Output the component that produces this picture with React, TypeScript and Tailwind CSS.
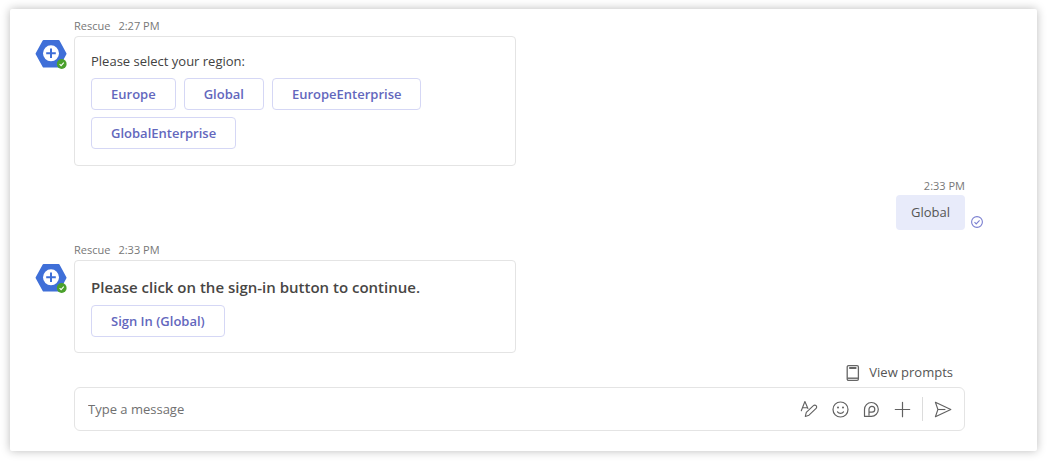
import React from 'react';

const Avatar: React.FC = () => (
  <svg viewBox="0 0 34 32" className="w-[34px] h-8 shrink-0" role="img" aria-label="Rescue, available">
    <path d="M8.6 2h15a1 1 0 0 1 .9.5l6.9 12.7a1.2 1.2 0 0 1 0 1.1L24.5 29a1 1 0 0 1-.9.5h-15a1 1 0 0 1-.9-.5L.7 16.3a1.2 1.2 0 0 1 0-1.1L7.7 2.5A1 1 0 0 1 8.6 2z" fill="#3f6fd8" />
    <circle cx="16" cy="15.3" r="8" fill="#fff" />
    <path d="M16 10.500v9.600M11.200 15.300h9.600" stroke="#3f6fd8" strokeWidth="2" />
    <circle cx="26.7" cy="26" r="4.9" fill="#4aa02c" />
    <path d="M24.600 26.100l1.500 1.500 2.700-3" fill="none" stroke="#fff" strokeWidth="1.1" />
  </svg>
);

const SeenIcon: React.FC = () => (
  <svg viewBox="0 0 12 12" className="w-3 h-3 shrink-0 mb-0.5" fill="none" stroke="#7a7fd0" strokeWidth="1.1" role="img" aria-label="Sent">
    <circle cx="6" cy="6" r="5.4" />
    <path d="M3.500 6.200l1.700 1.700 3.400-3.500" />
  </svg>
);

const PromptsIcon: React.FC = () => (
  <svg viewBox="0 0 14 18" className="w-3.5 h-[18px]" fill="none" stroke="#666" strokeWidth="1.3">
    <rect x="1.200" y="1.600" width="11.200" height="14.800" rx="1.300" />
    <path d="M3.200 4h7.200" strokeWidth="2" />
    <path d="M1.200 14.200h11.200" strokeWidth="1.400" />
  </svg>
);

const FormatIcon: React.FC = () => (
  <svg viewBox="0 0 18 18" className="w-[18px] h-[18px]" fill="none" stroke="#616161" strokeWidth="1.1" strokeLinejoin="round" strokeLinecap="round">
    <path d="M1.300 10.800L4.900 1.500l3 7M2.500 7.800h4.700" />
    <path d="M5.300 16.400l1-4 7.100-6.700a1.900 1.900 0 0 1 2.700 2.700l-7.100 6.800-3.700 1.200z" />
  </svg>
);

const EmojiIcon: React.FC = () => (
  <svg viewBox="0 0 18 18" className="w-[18px] h-[18px]" fill="none" stroke="#616161" strokeWidth="1.2" strokeLinecap="round">
    <circle cx="9.500" cy="9.500" r="7.500" />
    <path d="M6.500 11.800c1.500 2 4.500 2 6 0" />
    <circle cx="7" cy="7.500" r="1" fill="#616161" stroke="none" />
    <circle cx="12" cy="7.500" r="1" fill="#616161" stroke="none" />
  </svg>
);

const LoopIcon: React.FC = () => (
  <svg viewBox="0 0 18 18" className="w-[18px] h-[18px]" fill="none" stroke="#616161" strokeWidth="1.2" strokeLinejoin="round">
    <path d="M2.500 16.300V9.500a6.900 6.900 0 1 1 6.900 6.800H2.500z" />
    <path d="M7 15.800V9.300a2.900 2.900 0 1 1 2.900 2.900H7" />
  </svg>
);

const PlusIcon: React.FC = () => (
  <svg viewBox="0 0 18 18" className="w-[18px] h-[18px]" fill="none" stroke="#616161" strokeWidth="1.2" strokeLinecap="round">
    <path d="M9.500 2.300v14.400M2.300 9.500h14.400" />
  </svg>
);

const SendIcon: React.FC = () => (
  <svg viewBox="0 0 18 18" className="w-[18px] h-[18px]" fill="none" stroke="#616161" strokeWidth="1.1" strokeLinejoin="round">
    <path d="M1.400 2.200l15.400 7.300-15.400 7.300L3.900 9.500 1.400 2.200z" />
    <path d="M3.900 9.500h7.500" />
  </svg>
);

const ActionButton: React.FC<{ label: string }> = ({ label }) => (
  <button type="button" className="h-8 px-[19px] rounded border border-[#d5d7f5] bg-white text-[13px] leading-[18px] font-semibold text-[#6367bd]">
    {label}
  </button>
);

const BotMessage: React.FC<{ time: string; children: React.ReactNode }> = ({ time, children }) => (
  <div className="flex pl-[25px] pr-[72px]">
    <div className="w-[39px] shrink-0 pt-5">
      <Avatar />
    </div>
    <div className="min-w-0">
      <div className="flex gap-2 h-[18px] text-[11px] leading-4 text-[#777]">
        <span>Rescue</span>
        <span>{time}</span>
      </div>
      <div className="w-[442px] max-w-full rounded border border-[#e4e4e4] px-4 py-[15px]">{children}</div>
    </div>
  </div>
);

const regions = ['Europe', 'Global', 'EuropeEnterprise', 'GlobalEnterprise'];

const tools = [
  { label: 'Format', icon: <FormatIcon /> },
  { label: 'Emoji', icon: <EmojiIcon /> },
  { label: 'Loop components', icon: <LoopIcon /> },
  { label: 'Actions and apps', icon: <PlusIcon /> },
];

const App: React.FC = () => {
  return (
    <div className="bg-white px-2.5 pt-[9px] pb-2.5 font-['Open_Sans','Noto_Sans',sans-serif]">
      <main className="rounded-xs bg-white pt-[9px] pb-5 shadow-[0_0_10px_rgba(0,0,0,0.27)]">
        <div className="flex flex-col gap-3">
          <BotMessage time="2:27 PM">
            <p className="text-[13px] leading-[18px] text-[#424242] mb-2">Please select your region:</p>
            <div className="flex flex-wrap gap-x-2 gap-y-[7px] pr-14 pb-px">
              {regions.map((region) => (
                <ActionButton key={region} label={region} />
              ))}
            </div>
          </BotMessage>

          {/* Own reply */}
          <div className="flex justify-end items-end gap-1.5 pr-[54px]">
            <div className="flex flex-col items-end">
              <span className="h-[17px] text-[11px] leading-4 text-[#777]">2:33 PM</span>
              <p className="rounded bg-[#e8ebfa] px-[15px] pt-2 pb-[9px] text-[13px] leading-[18px] text-[#555]">Global</p>
            </div>
            <SeenIcon />
          </div>

          <BotMessage time="2:33 PM">
            <p className="text-[15px] leading-5 font-semibold text-[#484644] mt-px mb-2">
              Please click on the sign-in button to continue.
            </p>
            <ActionButton label="Sign In (Global)" />
          </BotMessage>
        </div>

        {/* Composer */}
        <div className="pl-16 pr-[72px] mt-2.5">
          <div className="flex justify-end pr-3 mb-1">
            <button type="button" className="flex items-center gap-[9px] h-5 text-[13px] text-[#555]">
              <PromptsIcon />
              View prompts
            </button>
          </div>
          <div className="flex items-center h-11 rounded-md border border-[#e4e4e4] pl-[13px] pr-3">
            <input
              type="text"
              aria-label="Type a message"
              placeholder="Type a message"
              className="flex-1 min-w-0 bg-transparent pt-px text-[13px] text-[#424242] placeholder:text-[#707070] outline-none"
            />
            <div className="flex items-center gap-[13px]">
              {tools.map((tool) => (
                <button key={tool.label} type="button" aria-label={tool.label}>
                  {tool.icon}
                </button>
              ))}
            </div>
            <span className="w-px h-6 bg-[#dcdcdc] ml-[11px] mr-[11px]" />
            <button type="button" aria-label="Send">
              <SendIcon />
            </button>
          </div>
        </div>
      </main>
    </div>
  );
};

export default App;
